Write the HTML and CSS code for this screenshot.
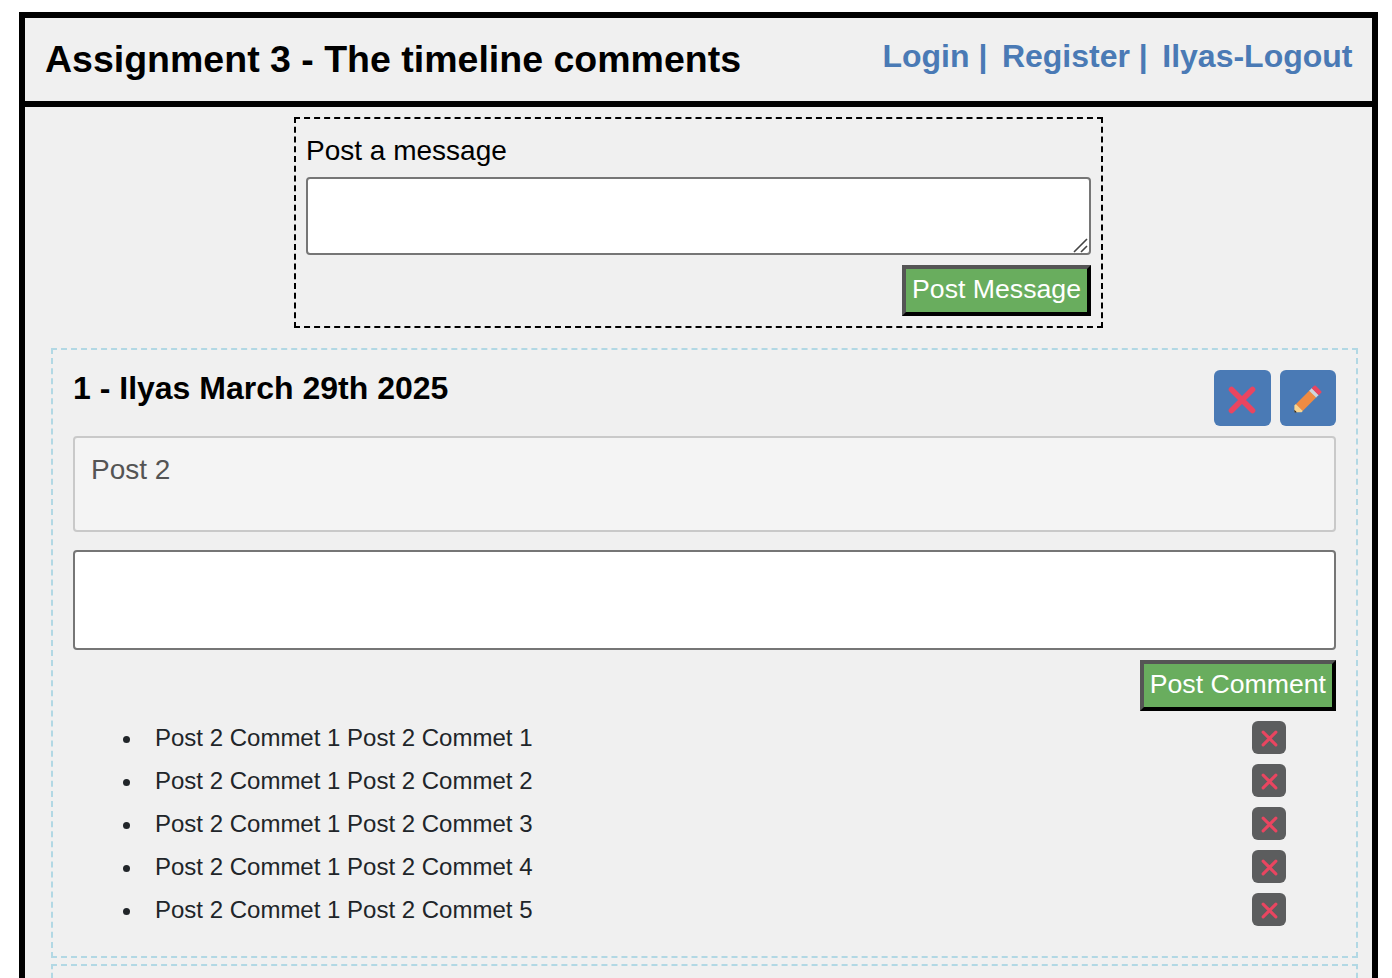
FILE: index.html
```
<!DOCTYPE html>
<html lang="en">
<head>
<meta charset="utf-8">
<title>Timeline comments</title>
<link rel="stylesheet" href="styles.css">
</head>
<body>
<svg class="defs" aria-hidden="true">
  <symbol id="cross" viewBox="0 0 28 28"><path d="M3.5 3.5L24.5 24.5M24.5 3.5L3.5 24.5"/></symbol>
</svg>
<div class="frame">
  <header class="header">
    <h1 class="title">Assignment 3 - The timeline comments</h1>
    <nav class="nav">
      <span>Login |</span>
      <span>Register |</span>
      <span>Ilyas-Logout</span>
    </nav>
  </header>
  <form class="composer">
    <label class="label" for="message">Post a message</label>
    <div class="field">
      <textarea class="area message" id="message"></textarea>
      <svg class="grip" viewBox="0 0 15 15"><path d="M1 14L14 1M8 14L14 8"/></svg>
    </div>
    <button class="submit" type="button">Post Message</button>
  </form>
  <section class="post">
    <div class="post-head">
      <h2 class="post-title">1 - Ilyas March 29th 2025</h2>
      <div class="actions">
        <button class="action delete" type="button" aria-label="Delete"><svg class="cross"><use href="#cross"/></svg></button>
        <button class="action edit" type="button" aria-label="Edit">
          <svg class="pencil" viewBox="0 0 28 28">
            <path fill="#ef8b42" d="M1.8 19.2L15.7 5.2L22.6 12.1L8.6 26.1Z"/>
            <path fill="#f9d590" d="M1.8 19L8.8 26L7.6 27.2H1.2Q.4 27.2.4 26.4V20.4Z"/>
            <path fill="#222" d="M.4 24.8L2.8 27.2L1.8 27.5Q.3 27.8.4 26.4Z"/>
            <path fill="#cfd6dc" d="M15.2 5.7L17.9 3L24.8 9.9L22.1 12.6Z"/>
            <path fill="#e94560" d="M17.6 3.3L20.2.8Q21 .1 21.8.8L27.2 6.2Q28 7 27.2 7.8L24.6 10.3Z"/>
          </svg>
        </button>
      </div>
    </div>
    <textarea class="area content" disabled>Post 2</textarea>
    <textarea class="area reply" aria-label="Comment"></textarea>
    <button class="submit" type="button">Post Comment</button>
    <ul class="comments">
      <li class="comment"><span>Post 2 Commet 1 Post 2 Commet 1</span><button class="remove" type="button" aria-label="Delete"><svg class="cross small"><use href="#cross"/></svg></button></li>
      <li class="comment"><span>Post 2 Commet 1 Post 2 Commet 2</span><button class="remove" type="button" aria-label="Delete"><svg class="cross small"><use href="#cross"/></svg></button></li>
      <li class="comment"><span>Post 2 Commet 1 Post 2 Commet 3</span><button class="remove" type="button" aria-label="Delete"><svg class="cross small"><use href="#cross"/></svg></button></li>
      <li class="comment"><span>Post 2 Commet 1 Post 2 Commet 4</span><button class="remove" type="button" aria-label="Delete"><svg class="cross small"><use href="#cross"/></svg></button></li>
      <li class="comment"><span>Post 2 Commet 1 Post 2 Commet 5</span><button class="remove" type="button" aria-label="Delete"><svg class="cross small"><use href="#cross"/></svg></button></li>
    </ul>
  </section>
  <section class="post next"></section>
</div>
</body>
</html>
```
FILE: styles.css
```
* { box-sizing: border-box; }
html { background: #fff; }
body {
  height: 978px;
  margin: 0;
  padding: 12px 14px 0 19px;
  font-family: "Liberation Sans", Arial, sans-serif;
  color: #000;
}
.defs { display: none; }
.frame {
  height: 966px;
  border: 6px solid #000;
  border-bottom: 0;
  background: #f0f0f0;
}
.header {
  display: flex;
  justify-content: space-between;
  align-items: flex-start;
  height: 89px;
  padding: 20px 19.5px 0 20px;
  border-bottom: 6px solid #000;
}
.title { margin: 0; font-size: 37.5px; line-height: 43px; }
.nav {
  display: flex;
  gap: 14.5px;
  font-size: 32px;
  font-weight: bold;
  line-height: 37px;
  color: #4a7ab5;
}
.composer {
  display: flex;
  flex-direction: column;
  width: 809px;
  height: 211px;
  margin: 10px 0 0 269px;
  padding: 10px;
  border: 2px dashed #000;
}
.label { height: 48px; padding-top: 6px; font-size: 28px; line-height: 32px; }
.field { position: relative; height: 78px; margin-bottom: 10px; }
.area {
  display: block;
  width: 100%;
  margin: 0;
  border: 2px solid #767676;
  border-radius: 4px;
  background: #fff;
  font: 28px/32px "Liberation Sans", Arial, sans-serif;
  resize: none;
  overflow: hidden;
}
.message { height: 78px; }
.grip {
  position: absolute;
  right: 3px;
  bottom: 2px;
  width: 15px;
  height: 15px;
  fill: none;
  stroke: #444;
  stroke-width: 1.6;
}
.submit {
  display: block;
  height: 51px;
  margin: 0 0 0 auto;
  padding: 0 6px 3px;
  border: 4px solid;
  border-color: #555 #000 #000 #555;
  background: #69ad5e;
  color: #fff;
  font: 26.667px/30px "Liberation Sans", Arial, sans-serif;
}
.post {
  height: 610px;
  margin: 20px 14px 0 26px;
  padding: 20px;
  border: 2px dashed #b2d8e4;
}
.next { height: 14px; margin-top: 6px; padding: 0; border-bottom: 0; }
.post-head { display: flex; justify-content: space-between; height: 66px; }
.post-title { margin: 0; font-size: 32px; line-height: 37px; }
.actions { display: flex; gap: 9px; }
.action, .remove {
  display: flex;
  align-items: center;
  justify-content: center;
  padding: 0;
  border: 0;
  border-radius: 6px;
}
.action { width: 56px; height: 56px; background: #4a7ab5; }
.delete { width: 57px; padding: 3px 1px 0 0; }
.edit { padding: 2px 1px 0 0; }
.cross {
  width: 28px;
  height: 28px;
  fill: none;
  stroke: #e94560;
  stroke-width: 5.6;
  stroke-linecap: round;
}
.pencil { width: 28px; height: 28px; }
.content {
  height: 96px;
  margin-bottom: 18px;
  padding: 16px;
  border-color: #c9c9c9;
  background: #f4f4f4;
  color: #545454;
}
.reply { height: 100px; margin-bottom: 10px; }
.comments {
  display: flex;
  flex-direction: column;
  gap: 10px;
  margin: 10px 50px 0;
  padding: 0;
  list-style: none;
}
.comment {
  display: flex;
  align-items: center;
  height: 33px;
  font-size: 24px;
  line-height: 27px;
  color: #212529;
}
.comment::before {
  content: "";
  width: 7px;
  height: 7px;
  margin: 3px 25px 0 0;
  border-radius: 50%;
  background: #212529;
}
.remove { width: 34px; height: 33px; margin-left: auto; padding-top: 2px; background: #5c5d5e; }
.small { width: 17px; height: 17px; stroke-width: 5; }
```
